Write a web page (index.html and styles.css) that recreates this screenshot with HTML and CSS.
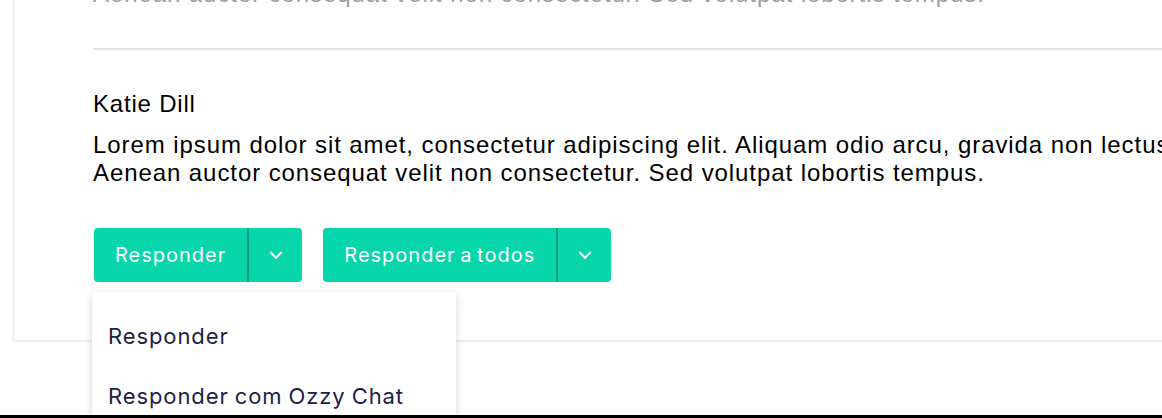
FILE: index.html
```html
<!DOCTYPE html>
<html lang="pt">
<head>
<meta charset="utf-8">
<title>Mensagens</title>
<link rel="stylesheet" href="styles.css">
</head>
<body>
<div class="page">
  <section class="card">
    <article class="message message-prev">
      <p class="body-text muted">Aenean auctor consequat velit non consectetur. Sed volutpat lobortis tempus.</p>
    </article>
    <hr class="divider">
    <article class="message">
      <div class="author">Katie Dill</div>
      <p class="body-text">Lorem ipsum dolor sit amet, consectetur adipiscing elit. Aliquam odio arcu, gravida non lectus<br>Aenean auctor consequat velit non consectetur. Sed volutpat lobortis tempus.</p>
      <div class="actions">
        <div class="split">
          <button class="split-main">Responder</button>
          <button class="split-toggle" aria-label="Mais opções">
            <svg width="26" height="26" viewBox="0 0 24 24"><path d="M7.41 8.59 12 13.17l4.59-4.58L18 10l-6 6-6-6 1.41-1.41z" fill="#fff"/></svg>
          </button>
          <ul class="menu">
            <li class="menu-item">Responder</li>
            <li class="menu-item">Responder com Ozzy Chat</li>
          </ul>
        </div>
        <div class="split">
          <button class="split-main">Responder a todos</button>
          <button class="split-toggle" aria-label="Mais opções">
            <svg width="26" height="26" viewBox="0 0 24 24"><path d="M7.41 8.59 12 13.17l4.59-4.58L18 10l-6 6-6-6 1.41-1.41z" fill="#fff"/></svg>
          </button>
        </div>
      </div>
    </article>
  </section>
</div>
<div class="bottom-bar"></div>
</body>
</html>
```

FILE: styles.css
```css
html, body {
  margin: 0;
  padding: 0;
  background: #ffffff;
  overflow: hidden;
  height: 418px;
}

.page {
  width: 1600px;
}

.card {
  margin: -40px 0 0 13px;
  padding: 19px 80px 58px 79px;
  background: #ffffff;
  border: 1px solid #ececec;
  box-shadow: 0 1px 3px rgba(0, 0, 0, 0.06);
  width: 1300px;
}

.message-prev {
  padding-bottom: 40px;
}

.body-text {
  margin: 0;
  font-family: "Liberation Sans", Arial, sans-serif;
  font-size: 24px;
  line-height: 28px;
  letter-spacing: 0.92px;
  color: #000000;
  white-space: nowrap;
}

.muted {
  color: #9e9e9e;
}

.divider {
  margin: 0;
  border: 0;
  height: 2px;
  background: #e6e6e9;
}

.author {
  margin-top: 40px;
  font-family: "Liberation Sans", Arial, sans-serif;
  font-size: 24px;
  line-height: 28px;
  letter-spacing: 0.8px;
  color: #000000;
}

.message .author + .body-text {
  margin-top: 13px;
}

.actions {
  display: flex;
  gap: 21px;
  margin-top: 41px;
  padding-left: 1px;
}

.split {
  position: relative;
  display: flex;
  height: 54px;
}

.split-main,
.split-toggle {
  margin: 0;
  border: 0;
  background: #06d6a9;
  color: #ffffff;
  font-family: Inter, "Noto Sans", sans-serif;
  font-size: 20px;
  font-weight: 400;
  letter-spacing: 1px;
  word-spacing: -2px;
  cursor: pointer;
}

.split-main {
  padding: 0 21px;
  border-radius: 4px 0 0 4px;
}

.split-toggle {
  box-sizing: border-box;
  width: 55px;
  border-left: 2px solid #079a79;
  border-radius: 0 4px 4px 0;
  display: flex;
  align-items: center;
  justify-content: center;
  padding: 0;
}

.split-toggle svg {
  display: block;
}

.menu {
  position: absolute;
  top: 64px;
  left: -2px;
  width: 364px;
  margin: 0;
  padding: 14px 0 0;
  list-style: none;
  background: #ffffff;
  border-radius: 4px;
  box-shadow: 0 2px 8px rgba(0, 0, 0, 0.16);
  z-index: 5;
}

.menu-item {
  height: 60px;
  line-height: 60px;
  padding: 0 16px;
  font-family: Inter, "Noto Sans", sans-serif;
  font-size: 22px;
  letter-spacing: 0.9px;
  word-spacing: -1px;
  color: #1d1e4a;
  white-space: nowrap;
}

.bottom-bar {
  position: fixed;
  left: 0;
  right: 0;
  bottom: 0;
  height: 3px;
  background: #000000;
  z-index: 10;
}
```
